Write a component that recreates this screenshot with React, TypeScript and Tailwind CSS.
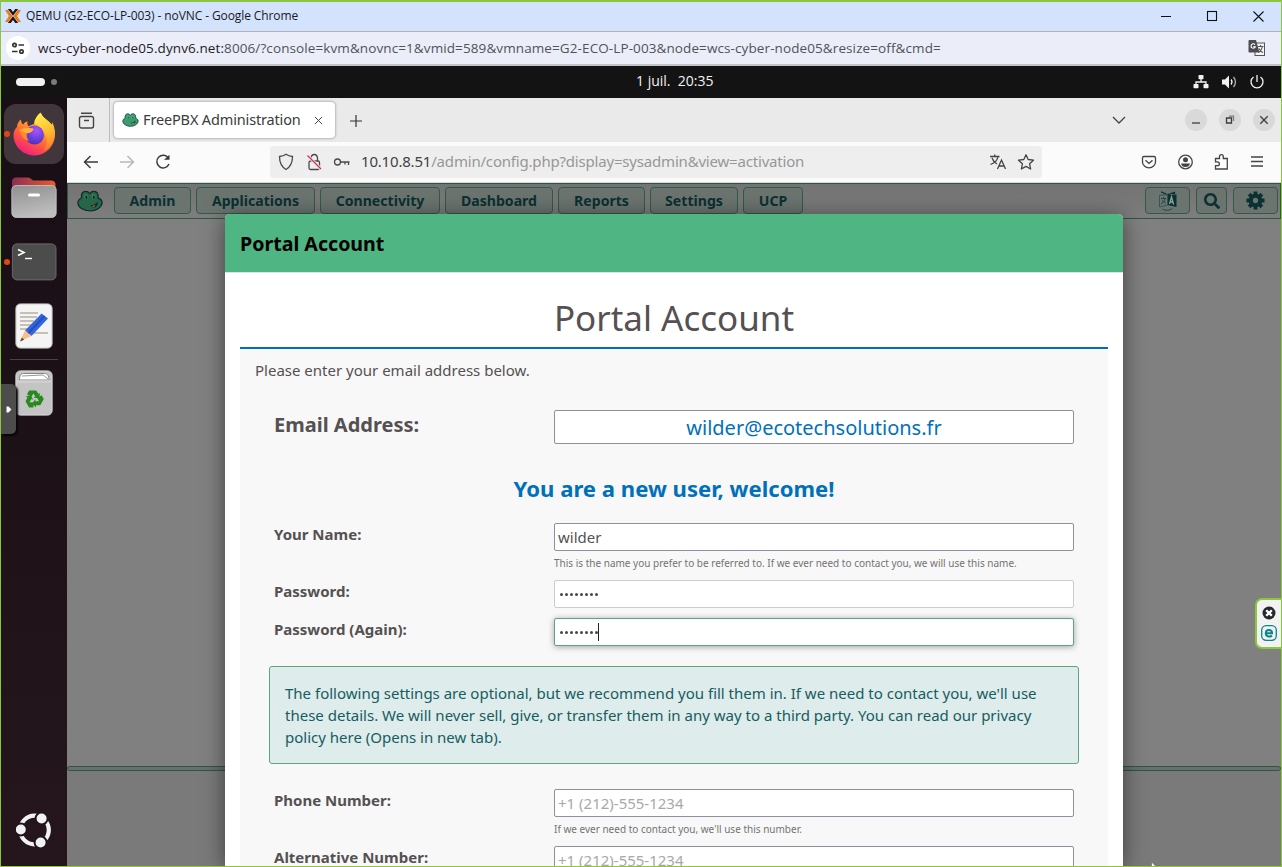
import React from "react";
import type { ReactNode } from "react";
import { FaSearch } from "react-icons/fa";

function Frog({ className }: { className: string }) {
  return (
    <svg viewBox="0 0 26 22" className={className}>
      <path d="M4.5 8C3.8 3 6.2 1.2 8.7 1.3c2 0 3.2 1 4.1 2.2 1-1.5 2.4-2.3 4.3-2.2 2.8.1 4.6 2.4 4 6.6 2 .9 4 2.4 4 4.9-.2 4.3-5.600 8-12 8.200C6.300 20.800 1 17.300.900 12.900.900 10.400 2.400 8.900 4.500 8z" fill="#3a9c6d" stroke="#173f45" strokeWidth="1.200" />
      <ellipse cx="9" cy="6.800" rx="1.900" ry="2.800" fill="#5cc08c" />
      <ellipse cx="16.600" cy="6.800" rx="1.900" ry="2.800" fill="#5cc08c" />
      <ellipse cx="9.300" cy="7.200" rx="0.900" ry="1.800" fill="#14383d" />
      <ellipse cx="16.800" cy="7.200" rx="0.900" ry="1.800" fill="#14383d" />
      <path d="M13 15c3 .7 5.500-.4 8-3.500-.3 3.500-2 6.300-4.400 6.100-1.500 0-2-1.600-3.600-2.600z" fill="#14383d" />
      <path d="M15 16.600c1-1.400 2.500-1.700 3.600-1-.6 1.200-1.700 2.200-3.600 1z" fill="#f0884a" />
    </svg>
  );
}

function Cog() {
  return (
    <svg viewBox="0 0 20 20" className="h-[19px] w-[19px]">
      <g stroke="#0b3031" strokeWidth="4">
        <path d="M10 .5v5M10 14.500v5M.5 10h5M14.500 10h5M3.300 3.300l3 3M13.700 13.700l3 3M16.700 3.300l-3 3M6.300 13.700l-3 3" />
      </g>
      <circle cx="10" cy="10" r="5" fill="none" stroke="#0b3031" strokeWidth="4.400" />
    </svg>
  );
}

function Firefox() {
  return (
    <svg viewBox="0 0 44 46" className="h-[46px] w-[44px]">
      <defs>
        <linearGradient id="fxBody" x1="0.8" y1="0" x2="0.25" y2="1">
          <stop offset="0" stopColor="#fff44f" />
          <stop offset="0.35" stopColor="#ffa02c" />
          <stop offset="0.65" stopColor="#ff5a3c" />
          <stop offset="1" stopColor="#f0168a" />
        </linearGradient>
        <linearGradient id="fxTail" x1="0.3" y1="0" x2="0.6" y2="1">
          <stop offset="0" stopColor="#fff04a" />
          <stop offset="0.6" stopColor="#ffb82e" />
          <stop offset="1" stopColor="#ff7a35" />
        </linearGradient>
        <radialGradient id="fxGlobe" cx="0.6" cy="0.25" r="0.8">
          <stop offset="0" stopColor="#a855f7" />
          <stop offset="0.5" stopColor="#7542e5" />
          <stop offset="1" stopColor="#4a2fb0" />
        </radialGradient>
      </defs>
      <path d="M5 16c0-3 1.500-5.500 4-7.500 0 2.500.8 4 2.300 5 1-1.700 2.600-3 4.200-3-.4 2 0 3.600 1 4.800L24 12c0-4 1.500-7.500 5-10 2 6 9.500 8 12.500 14C47 30 36 45 22 44.500 10 44 1.500 34.500 1.500 24c0-3 1.200-6 3.500-8z" fill="url(#fxBody)" />
      <path d="M22 12.500C22.500 8 25 4.500 28.500 1.500c.8 5 9.300 8 10.800 12.500 1-.500 1-2 .500-3.500 6.500 11 2 26-8.300 29 5-6 4-14 0-18.500-2-4-5-7-9.500-8.500z" fill="url(#fxTail)" />
      <circle cx="22.500" cy="24" r="9.500" fill="url(#fxGlobe)" />
      <path d="M7.500 19c4-2.200 9-2.700 14-1.200-.7 3-4 4.300-6.500 4.500-.8 3.700.7 6.700 3 8-5-1-9.500-5-10.500-11.300z" fill="#ff8a2e" />
      <path d="M7.500 19c4-2.200 9-2.700 14-1.200-.7 3-4 4.300-6.500 4.500-3.500-1-5-2.500-7.500-3.300z" fill="#ffb03a" />
    </svg>
  );
}

function Folder() {
  return (
    <svg viewBox="0 0 46 42" className="h-[42px] w-[46px]">
      <defs>
        <linearGradient id="foldBack" x1="0" x2="1">
          <stop offset="0" stopColor="#8d2c55" />
          <stop offset="1" stopColor="#e85d2c" />
        </linearGradient>
        <linearGradient id="foldFront" x1="0" y1="0" x2="0.3" y2="1">
          <stop offset="0" stopColor="#8f8f8f" />
          <stop offset="1" stopColor="#bdbdbd" />
        </linearGradient>
      </defs>
      <path d="M1 5a4 4 0 0 1 4-4.500h12c3 0 3.500 3 6 3h17a4 4 0 0 1 4.500 4V20H1z" fill="url(#foldBack)" />
      <rect x="0.800" y="8.500" width="44.400" height="32" rx="4.500" fill="url(#foldFront)" stroke="#c9c9c9" strokeWidth="0.800" />
      <rect x="17" y="16.500" width="12" height="3" rx="1.500" fill="#fff" />
    </svg>
  );
}

function Terminal() {
  return (
    <svg viewBox="0 0 46 38" className="h-[38px] w-[46px]">
      <rect x="1.400" y="0.900" width="43.600" height="36" rx="4.500" fill="#4c4c4c" stroke="#6e6e6e" strokeWidth="0.900" />
      <path d="M7 6.500l6 3-6 3" fill="none" stroke="#fff" strokeWidth="1.600" />
      <path d="M14 15.500h7" stroke="#fff" strokeWidth="1.400" />
    </svg>
  );
}

function Editor() {
  return (
    <svg viewBox="0 0 38 46" className="h-[46px] w-[38px]">
      <rect x="0.900" y="0.900" width="36.200" height="44.200" rx="4.500" fill="#f4f4f4" stroke="#c4c4c4" />
      <path d="M5 10h18M5 14h17M5 18h14M5 22h11M5 26h8M18 30h15" stroke="#c5c1b4" strokeWidth="2" />
      <path d="M26.500 10.500l6.500 5L16.500 33l-6.500-5.500z" fill="#3465dd" />
      <path d="M29.500 13L13 30.500" stroke="#2350bd" strokeWidth="2" />
      <path d="M10 27.500l6.500 5.500L5 38.500z" fill="#f9bf86" />
      <path d="M7 34.500l2 2.200-4 1.800z" fill="#444" />
    </svg>
  );
}

const recycleArm = "M14.200 20.500h7l2.300 3.600 1.700-1-1.200 5.200-5.400-.6 1.700-1.100-1.800-3-2.200 3.200-4.300-2.500z";

function Trash() {
  return (
    <svg viewBox="0 0 38 46" className="h-[46px] w-[38px]">
      <rect x="0.900" y="0.900" width="36.200" height="44.200" rx="4.500" fill="#c4c4c4" stroke="#dcdcdc" />
      <path d="M4.500 10c0-4.500 1.500-6.500 4-6.500h21c3 0 4.500 2 4.500 6.500z" fill="#fff" stroke="#888" strokeWidth="1" />
      <path d="M7 6l21-1 5 4" stroke="#9a9a9a" fill="none" />
      <rect x="1.500" y="10.300" width="35" height="2.500" fill="#d0d0d0" />
      <g fill="#268a1c">
        <path d={recycleArm} />
        <path transform="rotate(120 19 29)" d={recycleArm} />
        <path transform="rotate(240 19 29)" d={recycleArm} />
      </g>
    </svg>
  );
}

function UbuntuLogo() {
  return (
    <svg viewBox="0 0 36 36" className="h-[36px] w-[36px]">
      <circle cx="18.500" cy="18" r="14.300" fill="none" stroke="#f2f2f2" strokeWidth="4.200" />
      <g fill="#f2f2f2" stroke="#21151b" strokeWidth="2">
        <circle cx="25.600" cy="6.500" r="6" />
        <circle cx="4.800" cy="17.500" r="6" />
        <circle cx="24.600" cy="30.500" r="6" />
      </g>
    </svg>
  );
}

function Dock() {
  return (
    <div className="relative flex w-[66px] shrink-0 flex-col items-center bg-linear-to-b from-[#180e15] to-[#24161c]">
      <div className="mt-[6px] flex h-[60px] w-[60px] items-center justify-center rounded-[12px] bg-[#42363d]"><Firefox /></div>
      <div className="mt-[13px] h-[42px]"><Folder /></div>
      <div className="mt-[24px] h-[38px]"><Terminal /></div>
      <div className="mt-[22px] h-[46px]"><Editor /></div>
      <div className="mt-[10px] h-px w-[48px] bg-[#4a4246]" />
      <div className="mt-[10px] h-[46px]"><Trash /></div>
      <div className="mt-auto mb-[18px] h-[36px]"><UbuntuLogo /></div>
      <div className="absolute top-[33px] left-[3px] h-[6px] w-[6px] rounded-full bg-[#dd4814]" />
      <div className="absolute top-[161px] left-[3px] h-[6px] w-[6px] rounded-full bg-[#dd4814]" />
      <div className="absolute top-[286px] left-0 flex h-[50px] w-[15px] items-center justify-center rounded-r-[5px] bg-[#4d4d4d] shadow-[2px_2px_2px_#0a060a]">
        <svg viewBox="0 0 6 7" className="h-[7px] w-[6px]"><path d="M0.500 0.500h2l3 3-3 3h-2z" fill="#fff" /></svg>
      </div>
    </div>
  );
}

function WindowTitle() {
  return (
    <div className="flex h-[30px] shrink-0 items-center border-b border-[#b1b1b4] bg-[#d3e3fd] pb-px pl-[4px] font-['Open_Sans','Noto_Sans',sans-serif]">
      <svg viewBox="0 0 16 14" className="h-[14px] w-[16px]">
        <path d="M0 1h3l4.500 6L3 13H0l4-6zM16 1h-3L8.500 7l4.500 6h3l-4-6z" fill="#f07a10" />
        <path d="M2.800 0h3L8 3 10.200 0h3L8 6.700zM2.800 14h3L8 11l2.200 3h3L8 7.300z" fill="#1b1b1b" />
      </svg>
      <span className="ml-[5px] text-[12px] tracking-[-0.100px] whitespace-pre text-[#1a1a1a]">QEMU (G2-ECO-LP-003) - noVNC - Google Chrome</span>
      <svg viewBox="0 0 106 12" className="mr-[16px] ml-auto h-[12px] w-[106px]" fill="none" stroke="#111" strokeWidth="1.100">
        <path d="M2 6.500h10M94.500 1.500l10 10M104.500 1.500l-10 10" />
        <rect x="48.500" y="1.500" width="9" height="9" />
      </svg>
    </div>
  );
}

function AddressLine() {
  return (
    <div className="flex h-[34px] shrink-0 items-center border-b-2 border-[#c2c3c6] bg-[#ebeef8] pr-[15px] pl-[5px] font-['Open_Sans','Noto_Sans',sans-serif]">
      <span className="flex h-[24px] w-[24px] items-center justify-center rounded-full bg-white">
        <svg viewBox="0 0 14 14" className="h-[14px] w-[14px]" fill="none" stroke="#333" strokeWidth="1.700">
          <circle cx="3.500" cy="4" r="1.700" /><path d="M7.500 4H13M1 10.500h5.500" /><circle cx="10.500" cy="10.500" r="1.700" />
        </svg>
      </span>
      <span className="ml-[8px] text-[13.500px] tracking-[0.100px] whitespace-nowrap text-[#50535a]">
        <span className="text-[#1f2023]">wcs-cyber-node05.dynv6.net:</span>8006/?console=kvm&amp;novnc=1&amp;vmid=589&amp;vmname=G2-ECO-LP-003&amp;node=wcs-cyber-node05&amp;resize=off&amp;cmd=
      </span>
      <svg viewBox="0 0 18 18" className="ml-auto h-[18px] w-[18px]">
        <rect x="7" y="4" width="9.500" height="12.500" fill="#f4f4f6" stroke="#555" />
        <path d="M1.500 1h6.500l3.500 12.500h-10a1 1 0 0 1-1-1V2a1 1 0 0 1 1-1z" fill="#4b4d52" />
        <path d="M7 5.700A2.200 2.200 0 1 0 7.300 7.800H5.200" fill="none" stroke="#fff" strokeWidth="1.100" />
        <path d="M10 7.500h5.500M12.500 6v1.500M14.500 7.500c-.5 3-2 4.500-4 6M11 9.500c1 2 2.500 3.500 4 4" fill="none" stroke="#555" strokeWidth="1.100" />
      </svg>
    </div>
  );
}

function GnomeBar() {
  return (
    <div className="flex h-[32px] shrink-0 items-center bg-[#131313] font-['Open_Sans','Noto_Sans',sans-serif]">
      <div className="ml-[15px] h-[8px] w-[29px] rounded-full bg-[#f2f2f2]" />
      <div className="ml-[6px] h-[6px] w-[6px] rounded-full bg-[#7c7c7c]" />
      <div className="ml-[579px] pb-[3px] text-[14px] whitespace-pre text-[#f2f2f2]">1 juil.  20:35</div>
      <svg viewBox="0 0 72 16" className="mr-[16px] ml-auto h-[16px] w-[72px]">
        <g fill="#f2f2f2">
          <rect x="5.500" y="1" width="5" height="4.200" rx="0.700" />
          <rect x="0.500" y="10" width="5" height="4.200" rx="0.700" />
          <rect x="10.500" y="10" width="5" height="4.200" rx="0.700" />
          <path d="M29 5.500h3l4-4v13l-4-4h-3z" />
        </g>
        <g fill="none" stroke="#f2f2f2" strokeWidth="1.300">
          <path d="M8 5v3M3 10.500V8h10v2.500" />
          <path d="M38 5.500q2 2.500 0 5" /><path d="M40.500 3q4 5 0 10" strokeOpacity="0.700" />
          <path d="M60.500 3a6 6 0 1 0 7 0M64 1v7" />
        </g>
      </svg>
    </div>
  );
}

function TabStrip() {
  return (
    <div className="flex h-[44px] shrink-0 bg-[#eaeaea] text-[#3b3b3b]">
      <div className="flex w-[43px] items-center justify-center border-r border-[#bcbcbc] pr-[3px]">
        <svg viewBox="0 0 17 17" className="h-[17px] w-[17px]" fill="none" stroke="#444" strokeWidth="1.400">
          <path d="M3 1.200h11M3.500 4.500h10a2 2 0 0 1 2 2v7.500a2 2 0 0 1-2 2h-10a2 2 0 0 1-2-2V6.500a2 2 0 0 1 2-2zM6 8.500h5" />
        </svg>
      </div>
      <div className="mt-[4px] ml-[4px] flex h-[36px] w-[221px] items-center rounded-[4px] bg-white pl-[8px] shadow-[0_0_3px_rgba(0,0,0,0.450)]">
        <Frog className="h-[14px] w-[17px]" />
        <span className="ml-[4px] w-[159px] text-[14.500px] tracking-[-0.150px] whitespace-nowrap">FreePBX Administration</span>
        <svg viewBox="0 0 10 10" className="ml-[12px] h-[9px] w-[9px]" stroke="#444" strokeWidth="1.100"><path d="M1 1l8 8M9 1L1 9" /></svg>
      </div>
      <svg viewBox="0 0 12 12" className="mt-[17px] ml-[15px] h-[12px] w-[12px]" stroke="#333" strokeWidth="1.200"><path d="M6 0v12M0 6h12" /></svg>
      <svg viewBox="0 0 14 8" className="mt-[18px] mr-[59px] ml-auto h-[8px] w-[14px]" fill="none" stroke="#444" strokeWidth="1.300"><path d="M1 1l6 6 6-6" /></svg>
      <div className="mt-[11px] mr-[6px] flex gap-[12px]">
        <WindowDot><path d="M7 14h8" /></WindowDot>
        <WindowDot><path d="M7.500 9h5v5h-5z" /><path d="M10 7.200h4.500V12" strokeOpacity="0.600" /></WindowDot>
        <WindowDot><path d="M7.300 7.300l7.400 7.400M14.700 7.300l-7.400 7.400" /></WindowDot>
      </div>
    </div>
  );
}

function WindowDot({ children }: { children: ReactNode }) {
  return (
    <span className="h-[22px] w-[22px] rounded-full bg-[#d9d9d9]">
      <svg viewBox="0 0 22 22" className="h-[22px] w-[22px]" fill="none" stroke="#3d3d3d" strokeWidth="1.300">{children}</svg>
    </span>
  );
}

function Toolbar() {
  return (
    <div className="flex h-[41px] shrink-0 items-start border-b border-[#d8d8d8] bg-[#fbfbfb] pt-[4px]">
      <svg viewBox="0 0 90 18" className="mt-[7px] ml-[16px] h-[18px] w-[90px]" fill="none" strokeWidth="1.500">
        <path d="M15 9H1.500M7.500 3l-6 6 6 6" stroke="#3b3b3b" />
        <path d="M37 9h13M44.500 3l6 6-6 6" stroke="#b9b9b9" />
        <path d="M85.500 5.200A6.300 6.300 0 1 0 86 11" stroke="#3b3b3b" />
        <path d="M86.500 1.800V6.700h-5.500z" fill="#3b3b3b" stroke="none" />
      </svg>
      <div className="ml-[97px] flex h-[32px] w-[772px] items-center rounded-[4px] bg-[#eeeeee] pr-[7px] pl-[8px]">
        <svg viewBox="0 0 72 18" className="h-[18px] w-[72px]" fill="none" stroke="#4a4a4a" strokeWidth="1.300">
          <path d="M8 1.300c2 1.500 4 2 6.500 2.200 0 6-1.500 10-6.500 13-5-3-6.500-7-6.500-13C4 3.300 6 2.800 8 1.300z" />
          <rect x="31" y="8" width="10.500" height="8.500" rx="1.500" />
          <path d="M33 8V5q.5-3.500 3.300-3.500T39.500 5v3" />
          <path d="M29.500 2.500L43 16" stroke="#eeeeee" strokeWidth="3" />
          <path d="M29.500 2.500L43 16" stroke="#e22850" strokeWidth="1.300" />
          <circle cx="59.500" cy="9" r="3" /><path d="M62.500 9h9M70.500 9v3M67 9v2.500" />
        </svg>
        <span className="ml-[11px] pb-[2px] text-[15px] tracking-[-0.190px] whitespace-nowrap text-[#979797]"><span className="text-[#424242]">10.10.8.51</span>/admin/config.php?display=sysadmin&amp;view=activation</span>
        <svg viewBox="0 0 46 18" className="ml-auto h-[18px] w-[46px]" fill="none" stroke="#444" strokeWidth="1.300">
          <path d="M1 3.500h9.500M5.700 1.500v2M9 3.500c-.5 3.500-3.500 6.500-7.500 8M3 5c1 3 2.500 4.500 5 6M8.500 16l4-9 4 9M10 13h5" />
          <path d="M37 1.800l2.200 4.700 5.300.7-3.900 3.600 1 5.200-4.600-2.600-4.600 2.600 1-5.200-3.900-3.600 5.300-.7z" strokeLinejoin="round" />
        </svg>
      </div>
      <svg viewBox="0 0 124 18" className="mt-[7px] mr-[16px] ml-auto h-[18px] w-[124px]" fill="none" stroke="#444" strokeWidth="1.300">
        <path d="M3 3.500h10a1.500 1.500 0 0 1 1.500 1.500v4a6.500 5.800 0 0 1-13 0V5A1.500 1.500 0 0 1 3 3.500zM4.500 7.200l3.500 3.200 3.500-3.200" />
        <circle cx="44.500" cy="9" r="6.800" /><circle cx="44.500" cy="6.700" r="2.500" fill="#444" stroke="none" /><path d="M40 10.500h9c-.5 2.500-2 3.500-4.500 3.500s-4-1-4.500-3.500z" fill="#444" stroke="none" />
        <path d="M75 5.500H78.500V3.500a1.900 1.900 0 0 1 3.800 0v2h4v10.500H74.500v-3.300h2a1.900 1.900 0 0 0 0-3.800h-2V5.500z" />
        <path d="M110 4h12M110 8.500h12M110 13h12" />
      </svg>
    </div>
  );
}

const menu: [string, string][] = [
  ["Admin", "w-[77px]"],
  ["Applications", "w-[119px]"],
  ["Connectivity", "w-[120px]"],
  ["Dashboard", "w-[108px]"],
  ["Reports", "w-[87px]"],
  ["Settings", "w-[88px]"],
  ["UCP", "w-[60px]"],
];
const menuButton = "flex h-[27px] items-center justify-center rounded-[4px] border border-[#315b48] bg-[#6b746f] text-[14.100px] font-bold text-[#0b3031]";

function PbxMenu() {
  return (
    <div className="flex h-[36px] items-start border border-[#2b5743] bg-linear-to-b from-[#737373] to-[#7e7e7e] pt-[3px] pr-[2px] pl-[9px]">
      <Frog className="mt-[3px] h-[22px] w-[26px] brightness-[0.650]" />
      <div className="ml-[11px] flex gap-[5px]">
        {menu.map(([name, width]) => <div key={name} className={`${menuButton} ${width}`}>{name}</div>)}
      </div>
      <div className="ml-auto flex gap-[6px]">
        <div className={`${menuButton} w-[45px]`}>
          <svg viewBox="0 0 20 20" className="h-[20px] w-[20px]">
            <path d="M9.500 4l9-.5V16l-9-2z" fill="#0b3031" />
            <path d="M3 .8l6.500 3 7-2.500v2" fill="none" stroke="#0b3031" strokeWidth="1.200" />
            <path d="M1.500 4.500l8-1V14l-8 2z" fill="none" stroke="#2d5553" strokeWidth="0.900" />
            <path d="M3 7.500h5M5.500 6v2M7 8c-.5 2-2 4-4 5M4 9.500l3.500 2.500M4.500 18c3 1.800 7 1.800 10-.5" fill="none" stroke="#1c4a4a" />
            <path d="M11.500 13l2-7 2.100 7.500M12.300 11h2.900" fill="none" stroke="#8aa39b" strokeWidth="1.300" />
          </svg>
        </div>
        <div className={`${menuButton} w-[31px]`}><FaSearch className="h-[16px] w-[16px]" /></div>
        <div className={`${menuButton} w-[45px]`}><Cog /></div>
      </div>
    </div>
  );
}

function Label({ children }: { children: ReactNode }) {
  return <div className="w-[280px] shrink-0 text-[15px] leading-[22px] font-bold">{children}</div>;
}

const field = "flex h-[28px] w-[520px] items-center rounded-[2px] border bg-white pl-[3px] text-[15px]";

function Dots() {
  return (
    <div className="ml-[2px] flex gap-[2px]">
      {[0, 1, 2, 3, 4, 5, 6, 7].map((i) => <span key={i} className="h-[3px] w-[3px] rounded-full bg-[#4a4648]" />)}
    </div>
  );
}

function PortalModal() {
  return (
    <div className="absolute top-[31px] left-[158px] flex h-[652px] w-[898px] flex-col overflow-hidden rounded-t-[5px] bg-white text-[#555152] shadow-[0_3px_22px_rgba(0,0,0,0.500)]">
      <div className="flex h-[59px] shrink-0 items-center border-b border-[#dde5e0] bg-[#4fb583] pt-[2px] pl-[15px] text-[19.600px] font-bold text-black">Portal Account</div>
      <div className="mx-[15px] flex h-[76px] shrink-0 items-center justify-center border-b-2 border-[#0070ba] pt-[16px] text-[35px] leading-[50px]">Portal Account</div>
      <div className="mx-[15px] grow bg-[#f8f8f8]">
        <div className="h-[61px] pt-[9px] pl-[15px] text-[15px] leading-[24px]">Please enter your email address below.</div>
        <div className="flex h-[34px] pl-[34px]">
          <div className="w-[280px] text-[20px] leading-[30px] font-bold">Email Address:</div>
          <div className="flex w-[520px] items-center justify-center rounded-[2px] border border-[#8f8f9d] bg-white pt-[2px] text-[20px] text-[#0070ba]">wilder@ecotechsolutions.fr</div>
        </div>
        <div className="mt-[28px] h-[51px] text-center text-[22.100px] leading-[32px] font-bold text-[#0070ba]">You are a new user, welcome!</div>
        <div className="flex h-[57px] pl-[34px]">
          <Label>Your Name:</Label>
          <div>
            <div className={`${field} border-[#8f8f9d]`}>wilder</div>
            <div className="mt-[4px] text-[10px] leading-[16px] text-[#737373]">This is the name you prefer to be referred to. If we ever need to contact you, we will use this name.</div>
          </div>
        </div>
        <div className="flex h-[38px] pl-[34px]">
          <Label>Password:</Label>
          <div className={`${field} border-[#cccccc]`}><Dots /></div>
        </div>
        <div className="flex h-[48px] pl-[34px]">
          <Label>Password (Again):</Label>
          <div className={`${field} border-[#5da583] shadow-[0_1px_6px_rgba(0,0,0,0.350)]`}><Dots /><span className="h-[18px] w-px bg-[#222]" /></div>
        </div>
        <div className="mx-[29px] h-[98px] rounded-[3px] border border-[#5da583] bg-[#deecec] px-[15px] pt-[15px] text-[15px] leading-[22px] whitespace-nowrap text-[#165c60]">
          The following settings are optional, but we recommend you fill them in. If we need to contact you, we'll use<br />
          these details. We will never sell, give, or transfer them in any way to a third party. You can read our privacy<br />
          policy here (Opens in new tab).
        </div>
        <div className="mt-[25px] flex h-[57px] pl-[34px]">
          <Label>Phone Number:</Label>
          <div>
            <div className={`${field} border-[#8f8f9d] text-[#aaa8a8]`}>+1 (212)-555-1234</div>
            <div className="mt-[4px] text-[10px] leading-[16px] text-[#737373]">If we ever need to contact you, we'll use this number.</div>
          </div>
        </div>
        <div className="flex h-[38px] pl-[34px]">
          <Label>Alternative Number:</Label>
          <div className={`${field} border-[#8f8f9d] text-[#aaa8a8]`}>+1 (212)-555-1234</div>
        </div>
      </div>
    </div>
  );
}

function SideWidget() {
  return (
    <div className="absolute top-[596px] right-0 flex h-[51px] w-[26px] flex-col items-center gap-[5px] rounded-l-[7px] border-2 border-r-0 border-[#8cc63f] bg-[#f2f2f3] pt-[6px]">
      <svg viewBox="0 0 14 14" className="h-[14px] w-[14px]"><circle cx="7" cy="7" r="6.500" fill="#25282d" /><path d="M4.200 4.200l5.600 5.600M9.800 4.200L4.200 9.800" stroke="#fff" strokeWidth="2.300" /></svg>
      <svg viewBox="0 0 16 16" className="h-[16px] w-[16px]" fill="none" stroke="#0a848c"><rect x="0.700" y="0.700" width="14.600" height="14.600" rx="4.500" strokeWidth="1.300" /><path d="M4.800 8.300h6.300c0-4.300-6.300-4.300-6.300 0 0 3.800 4.500 3.900 6.100 2.200" strokeWidth="2" /></svg>
    </div>
  );
}

export default function App() {
  return (
    <div className="relative flex h-[867px] w-[1282px] flex-col overflow-hidden border border-t-2 border-[#8cc63f] font-['Noto_Sans',sans-serif]">
      <WindowTitle />
      <AddressLine />
      <GnomeBar />
      <div className="flex min-h-0 flex-1">
        <Dock />
        <div className="flex min-w-0 grow flex-col">
          <TabStrip />
          <Toolbar />
          <div className="relative min-h-0 flex-1 overflow-hidden bg-[#808080]">
            <PbxMenu />
            <div className="mt-[547px] h-[5px] rounded-[3px] border border-[#2b5743] bg-[#67706b]" />
            <div className="h-[100px] bg-[#7a7a7a]" />
            <PortalModal />
            <svg viewBox="0 0 7 10" className="absolute top-[679px] left-[1084px] h-[10px] w-[7px]"><path d="M0.500 0v9l5-4z" fill="#fff" stroke="#555" strokeWidth="0.500" /></svg>
          </div>
        </div>
      </div>
      <SideWidget />
    </div>
  );
}
